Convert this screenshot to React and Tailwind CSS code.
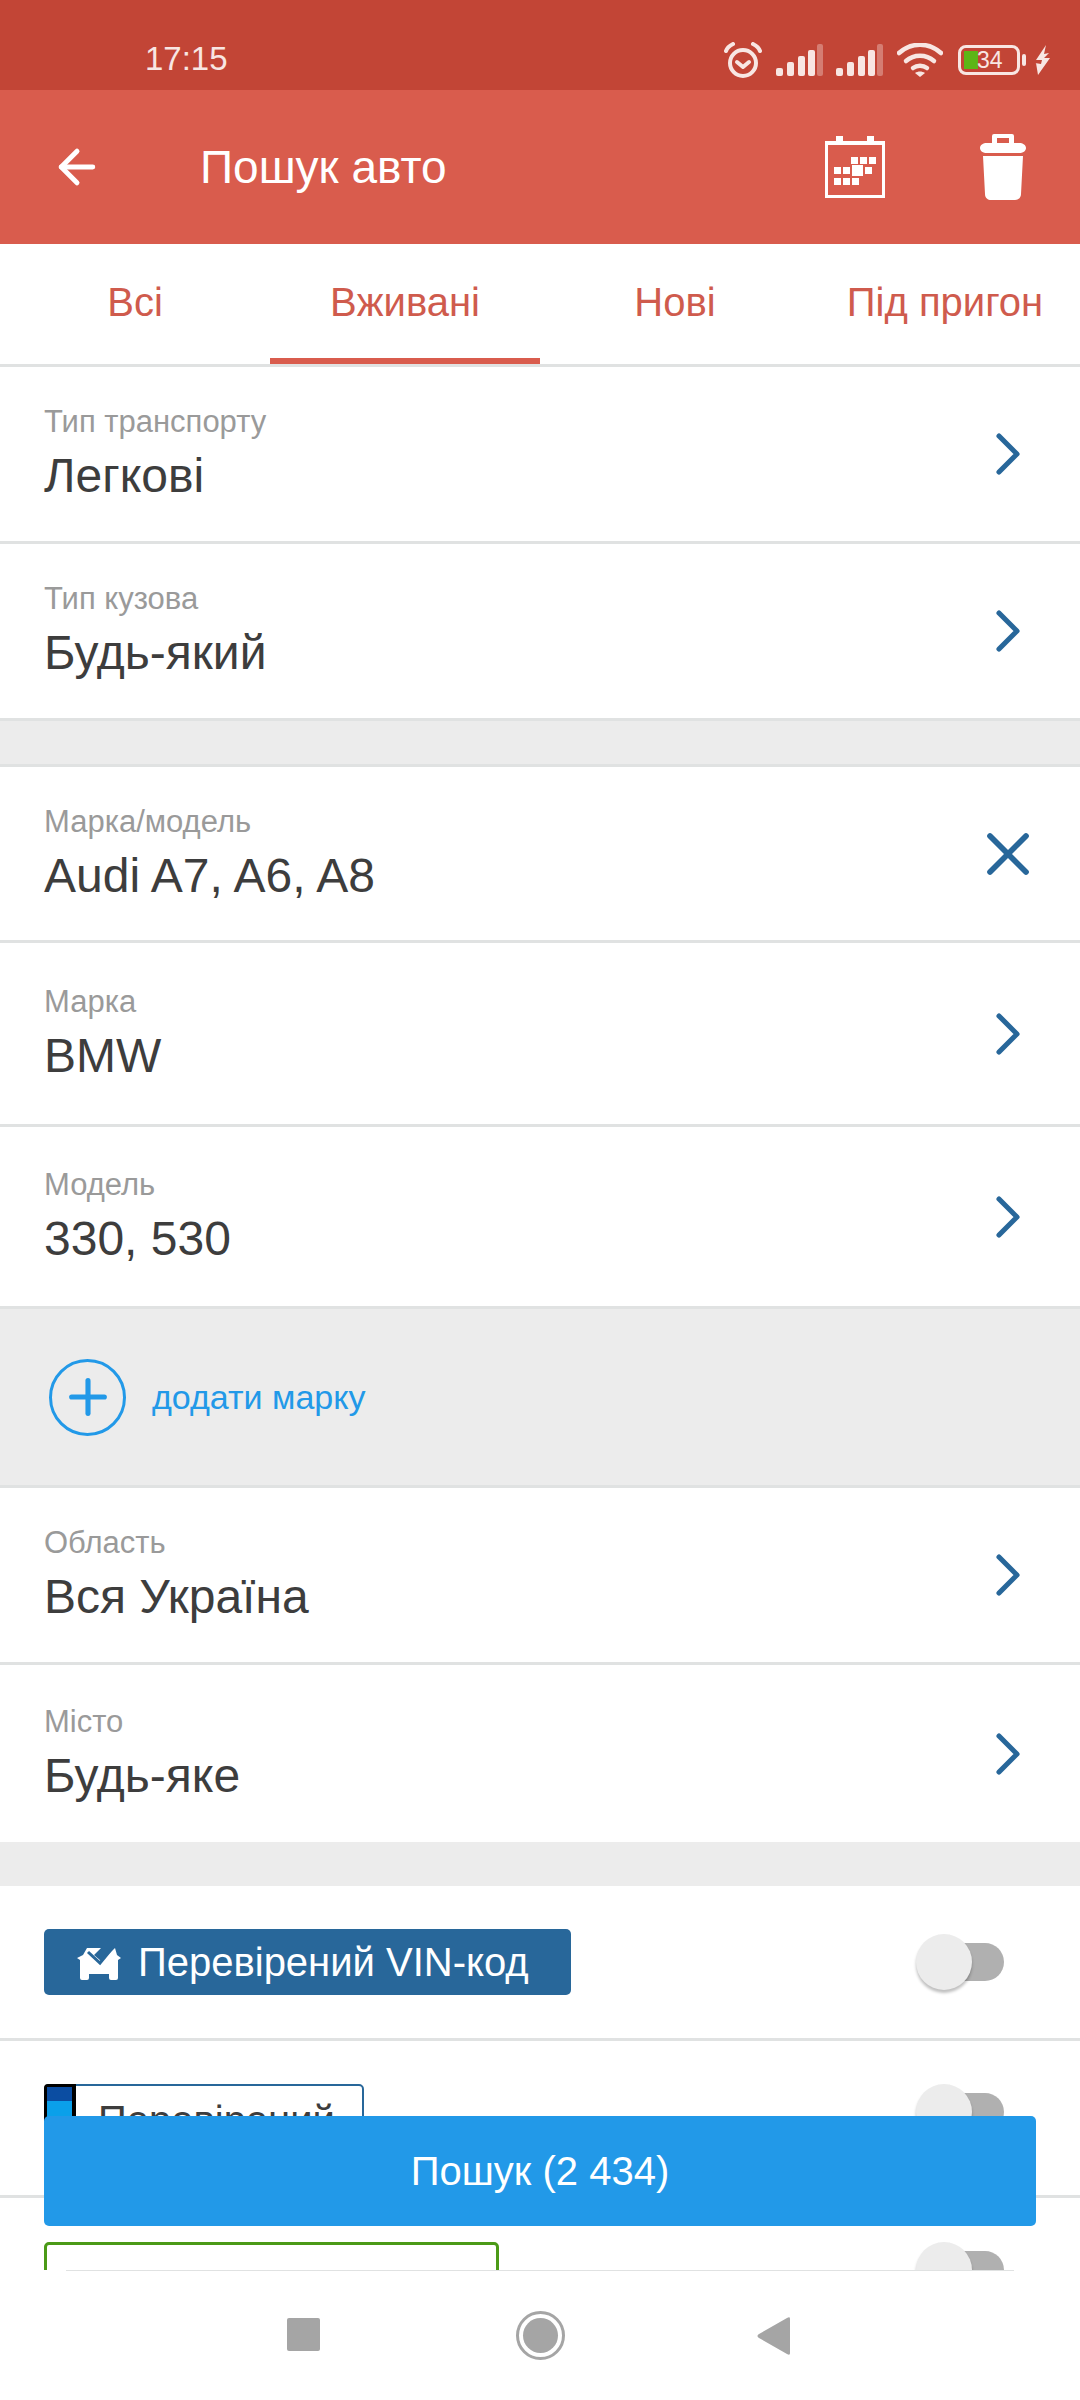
import React from "react";
import { ArrowLeft, ChevronRight, X, Plus } from "lucide-react";

const SANS = "font-['Liberation_Sans',Arial,sans-serif]";

const Row = ({ label, value, icon = "chevron", h = "h-[177px]", border = true }) => (
  <div className={`${h} flex items-center justify-between bg-white pl-[44px] pr-[50px] ${border ? "border-b-[3px] border-[#e0e2e2]" : ""}`}>
    <div className="flex flex-col">
      <span className="text-[31px] leading-[40px] text-[#9a9a9a]">{label}</span>
      <span className="mt-[4px] text-[48px] leading-[60px] text-[#3d3d3d]">{value}</span>
    </div>
    {icon === "chevron" ? (
      <ChevronRight className="h-[72px] w-[72px] -mr-[14px] text-[#28679a]" strokeWidth={1.7} absoluteStrokeWidth={false} />
    ) : (
      <X className="h-[72px] w-[72px] -mr-[14px] text-[#28679a]" strokeWidth={1.9} />
    )}
  </div>
);

const Toggle = () => (
  <div className="relative h-[56px] w-[88px]">
    <div className="absolute right-0 top-[9px] h-[38px] w-[60px] rounded-full bg-[#b0b0b0]" />
    <div className="absolute left-0 top-0 h-[56px] w-[56px] rounded-full bg-[#ececec] shadow-[0_3px_3px_rgba(0,0,0,0.25)]" />
  </div>
);

const Signal = () => (
  <svg width="48" height="32" viewBox="0 0 48 32" fill="#f8e6e3">
    <rect x="0" y="24" width="7" height="8" rx="2" />
    <rect x="11" y="18" width="7" height="14" rx="2" />
    <rect x="22" y="12" width="7" height="20" rx="2" />
    <rect x="32" y="6" width="7" height="26" rx="2" />
    <rect x="41" y="0" width="6" height="32" rx="2" opacity="0.35" />
  </svg>
);

const StatusBar = () => (
  <div className="flex h-[90px] items-end justify-between bg-[#c24536] pb-[12px] pl-[145px] pr-[28px] text-[#f8e6e3]">
    <span className="text-[33px] leading-[38px] font-medium">17:15</span>
    <div className="flex items-center">
      <svg width="40" height="36" viewBox="0 0 40 36" fill="none" stroke="#f8e6e3" strokeWidth="4" strokeLinecap="round" strokeLinejoin="round">
        <circle cx="20" cy="21" r="13" />
        <path d="M14 20l6 5 6-5" />
        <path d="M3 9c1-3 3-5 7-7M37 9c-1-3-3-5-7-7" />
      </svg>
      <div className="ml-[13px]"><Signal /></div>
      <div className="ml-[12px]"><Signal /></div>
      <svg className="ml-[13px]" width="46" height="34" viewBox="0 0 46 34" fill="none" stroke="#f8e6e3" strokeWidth="4.5" strokeLinecap="round">
        <path d="M2 10c12-11 30-11 42 0" />
        <path d="M9 18c8-7 20-7 28 0" />
        <path d="M16 25c4-3 10-3 14 0" />
        <path d="M23 34l-5-4c3-2 7-2 10 0z" fill="#f8e6e3" stroke="none" />
      </svg>
      <div className="relative ml-[15px] flex h-[30px] w-[62px] items-center rounded-[8px] border-[3px] border-[#f8e6e3]">
        <div className="ml-[3px] h-[18px] w-[14px] bg-[#5cb517]" />
        <span className="absolute left-[16px] top-[-3px] text-[23px] leading-[30px] text-[#f8e6e3]">34</span>
      </div>
      <div className="ml-[2px] h-[12px] w-[4px] rounded-[2px] bg-[#f8e6e3]" />
      <svg className="ml-[8px]" width="18" height="30" viewBox="0 0 18 30" fill="#f8e6e3">
        <path d="M12 0L2 15l6 0-1 4-6-1 1 0L4 30l12-17-6 0 5-5-5 1z" />
      </svg>
    </div>
  </div>
);

const AppBar = () => (
  <div className="flex h-[154px] items-center bg-[#d95c4d] text-white">
    <ArrowLeft className="ml-[50px] h-[54px] w-[54px]" strokeWidth={2.2} />
    <span className="ml-[96px] text-[46px] leading-[60px]">Пошук авто</span>
    <svg className="ml-auto" width="60" height="62" viewBox="0 0 60 62" fill="#fff">
      <path fillRule="evenodd" d="M0 5h11V0h7v5h24V0h7v5h11v57H0zM3 9v50h54V9z" />
      <rect x="26" y="21" width="7" height="7" /><rect x="35" y="21" width="7" height="7" /><rect x="44" y="21" width="7" height="7" />
      <rect x="9" y="31" width="7" height="7" /><rect x="18" y="31" width="7" height="7" /><rect x="27" y="29" width="11" height="11" /><rect x="40" y="31" width="7" height="7" />
      <rect x="9" y="42" width="7" height="7" /><rect x="18" y="42" width="7" height="7" /><rect x="27" y="42" width="7" height="7" />
    </svg>
    <svg className="ml-[95px] mr-[54px]" width="46" height="66" viewBox="0 0 46 66" fill="#fff">
      <path fillRule="evenodd" d="M14 0h18a2 2 0 0 1 2 2v7h5c4 0 7 2 7 5s-3 5-7 5H7c-4 0-7-2-7-5s3-5 7-5h5V2a2 2 0 0 1 2-2zM17 4v5h12V4z" />
      <path d="M3 22h40l-2 38c0 4-3 6-6 6H11c-3 0-6-2-6-6z" />
    </svg>
  </div>
);

const Tabs = () => (
  <div className="grid h-[123px] grid-cols-4 border-b-[3px] border-[#e0e2e2] bg-white text-[40px] text-[#cf5b4d]">
    {["Всі", "Вживані", "Нові", "Під пригон"].map((t, i) => (
      <div key={t} className={`relative flex items-center justify-center pb-[4px] ${i === 3 ? "whitespace-nowrap" : ""}`}>
        {t}
        {i === 1 && <div className="absolute bottom-0 left-0 right-0 h-[6px] bg-[#d95c4d]" />}
      </div>
    ))}
  </div>
);

const AddBrand = () => (
  <div className="flex h-[179px] items-center bg-[#ececec] pl-[49px] border-b-[3px] border-[#e0e2e2]">
    <div className="flex h-[77px] w-[77px] items-center justify-center rounded-full border-[3px] border-[#2299e8]">
      <Plus className="h-[56px] w-[56px] text-[#2299e8]" strokeWidth={2.2} />
    </div>
    <span className="ml-[26px] text-[34px] text-[#2299e8]">додати марку</span>
  </div>
);

const CarCheck = () => (
  <svg width="44" height="36" viewBox="0 0 44 36" fill="#fff">
    <path d="M0 14l6-3 4-7h14l-7 7 7 6L38 4l2 7 4 3-3 2v18a2 2 0 0 1-2 2h-5a2 2 0 0 1-2-2v-4H12v4a2 2 0 0 1-2 2H5a2 2 0 0 1-2-2V16z" />
    <path d="M11 8l12 11L37 2" fill="none" stroke="#28679a" strokeWidth="3" />
  </svg>
);

const Badges = () => (
  <>
    <div className="flex h-[155px] items-center justify-between border-b-[3px] border-[#e0e2e2] bg-white pl-[44px] pr-[76px]">
      <div className="flex h-[66px] w-[527px] items-center rounded-[5px] bg-[#28679a] pl-[33px] text-white">
        <CarCheck />
        <span className="ml-[17px] text-[40px] leading-[66px]">Перевірений VIN-код</span>
      </div>
      <Toggle />
    </div>
    <div className="flex h-[157px] justify-between border-b-[3px] border-[#e0e2e2] bg-white pl-[44px] pr-[76px] pt-[43px]">
      <div className="flex h-[66px] w-[320px] rounded-[5px] border-[2px] border-[#28679a] bg-white">
        <div className="flex h-full w-[32px] flex-col rounded-l-[4px] border-[3px] border-r-[4px] border-black -ml-[2px] -mt-[2px]">
          <div className="h-[14px] bg-[#0b4da2]" />
          <div className="h-[40px] bg-[#0aa0ea]" />
        </div>
        <span className="ml-[22px] mt-[11px] text-[40px] leading-[46px] text-[#3d3d3d]">Перевірений</span>
      </div>
      <Toggle />
    </div>
    <div className="flex h-[160px] justify-between bg-white pl-[44px] pr-[76px] pt-[44px]">
      <div className="h-[66px] w-[455px] rounded-[5px] border-[3px] border-[#4b9a17] bg-white" />
      <Toggle />
    </div>
  </>
);

const NavBar = () => (
  <div className="z-10 h-[130px] bg-white px-[66px]">
    <div className="h-[1px] bg-[#e0e2e2]" />
    <div className="relative flex h-[129px] items-center justify-center">
      <div className="absolute left-[221px] top-[47px] h-[33px] w-[33px] rounded-[2px] bg-[#a5a5a5]" />
      <div className="absolute left-[450px] top-[40px] flex h-[49px] w-[49px] items-center justify-center rounded-full border-[3px] border-[#a5a5a5]">
        <div className="h-[35px] w-[35px] rounded-full bg-[#a5a5a5]" />
      </div>
      <svg className="absolute left-[691px] top-[46px]" width="33" height="38" viewBox="0 0 33 38" fill="#a5a5a5">
        <path d="M33 2v34c0 2-1 2-3 1L2 21c-2-1-2-3 0-4L30 1c2-1 3-1 3 1z" />
      </svg>
    </div>
  </div>
);

const App = () => (
  <div className={`relative flex h-[2400px] w-[1080px] flex-col overflow-hidden bg-white ${SANS}`}>
    <StatusBar />
    <AppBar />
    <Tabs />
    <div className="min-h-0 flex-1 overflow-hidden">
      <Row label="Тип транспорту" value="Легкові" />
      <Row label="Тип кузова" value="Будь-який" />
      <div className="h-[46px] border-b-[3px] border-[#e0e2e2] bg-[#ececec]" />
      <Row label="Марка/модель" value="Audi A7, A6, A8" icon="x" h="h-[176px]" />
      <Row label="Марка" value="BMW" h="h-[184px]" />
      <Row label="Модель" value="330, 530" h="h-[182px]" />
      <AddBrand />
      <Row label="Область" value="Вся Україна" />
      <Row label="Місто" value="Будь-яке" border={false} />
      <div className="h-[44px] bg-[#ececec]" />
      <Badges />
    </div>
    <NavBar />
    <button className="absolute left-[44px] top-[2116px] h-[110px] w-[992px] rounded-[5px] bg-[#2299e8] text-[40px] text-white">
      Пошук (2 434)
    </button>
  </div>
);

export default App;
